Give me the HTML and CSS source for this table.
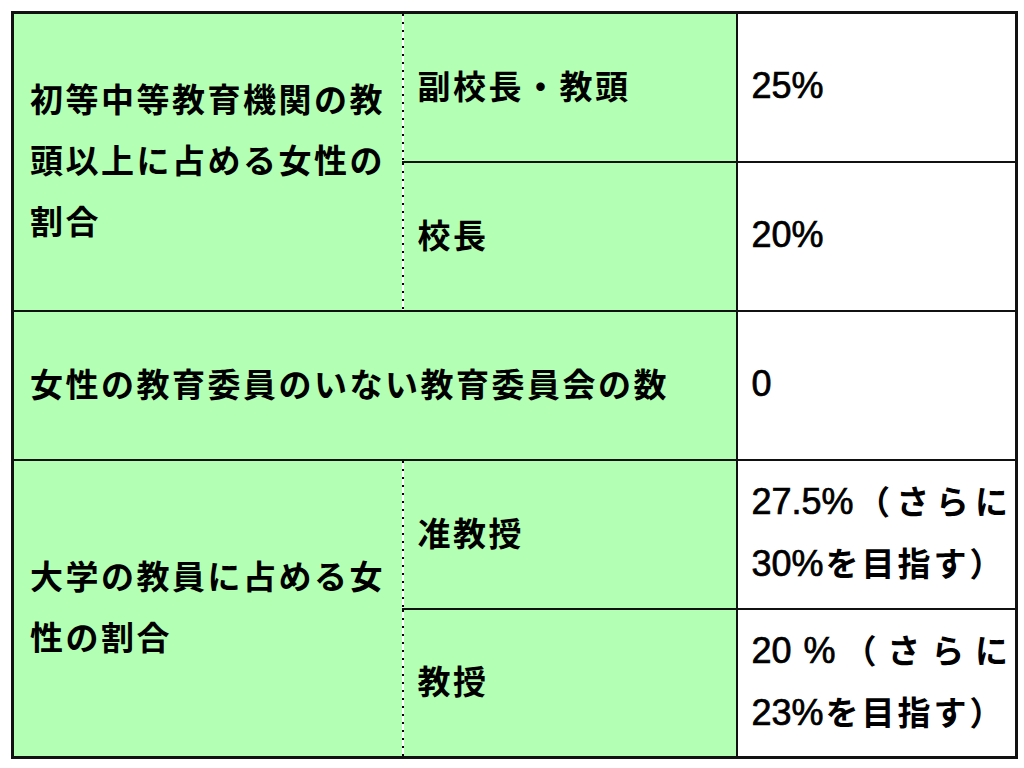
FILE: index.html
```html
<!DOCTYPE html>
<html lang="ja">
<head>
<meta charset="utf-8">
<title>女性の割合</title>
<link rel="stylesheet" href="styles.css">
</head>
<body>
<table class="grid">
  <colgroup>
    <col class="c1">
    <col class="c2">
    <col class="c3">
  </colgroup>
  <tr>
    <th class="head" rowspan="2">初等中等教育機関の教頭以上に占める女性の割合</th>
    <th class="sub">副校長・教頭</th>
    <td class="val"><span class="num">25%</span></td>
  </tr>
  <tr>
    <th class="sub">校長</th>
    <td class="val"><span class="num">20%</span></td>
  </tr>
  <tr>
    <th class="wide" colspan="2">女性の教育委員のいない教育委員会の数</th>
    <td class="val"><span class="num">0</span></td>
  </tr>
  <tr>
    <th class="head" rowspan="2">大学の教員に占める女性の割合</th>
    <th class="sub">准教授</th>
    <td class="val"><span class="num">27.5%</span>（さらに<span class="num gap">30%</span>を目指す）</td>
  </tr>
  <tr>
    <th class="sub">教授</th>
    <td class="val"><span class="num">20</span><span class="num pct">%</span>（さらに<span class="num gap">23%</span>を目指す）</td>
  </tr>
</table>
</body>
</html>
```

FILE: styles.css
```css
html, body {
  margin: 0;
  padding: 0;
  background: #ffffff;
}

body {
  padding: 11px 0 0 11px;
  font-family: "Noto Sans CJK JP", "Liberation Sans", sans-serif;
  color: #000;
}

.grid {
  border-collapse: collapse;
  table-layout: fixed;
  width: 1004px;
  border: 3px solid #111;
}

.c1 { width: 389px; }
.c2 { width: 335px; }
.c3 { width: 280px; }

.grid tr {
  height: 149px;
}

.grid th,
.grid td {
  border: 2px solid #111;
  vertical-align: middle;
  text-align: left;
  font-size: 33px;
  font-weight: 700;
  letter-spacing: 2.5px;
  line-height: 61px;
  padding: 0 0 4px 0;
}

.head {
  background: #b3ffb3;
  padding: 0 10px 4px 16px !important;
  border-right: none !important;
}

.sub {
  background:
    repeating-linear-gradient(to bottom, #000 0 2px, #fff 2px 8px) left top / 2px 100% no-repeat,
    #b3ffb3;
  border-left: none !important;
  padding-left: 16px !important;
}

.wide {
  background: #b3ffb3;
  padding-left: 16px !important;
}

.val {
  background: #fff;
  padding: 0 4px 4px 14px !important;
  text-align: justify !important;
  letter-spacing: 3px !important;
}

.num {
  font-family: "Liberation Sans", Arial, sans-serif;
  font-weight: 400;
  -webkit-text-stroke: 0.7px #000;
  font-size: 36px;
  letter-spacing: 0;
}

.gap {
  margin-right: 2px;
}

.pct {
  margin-left: 12px;
}
```
